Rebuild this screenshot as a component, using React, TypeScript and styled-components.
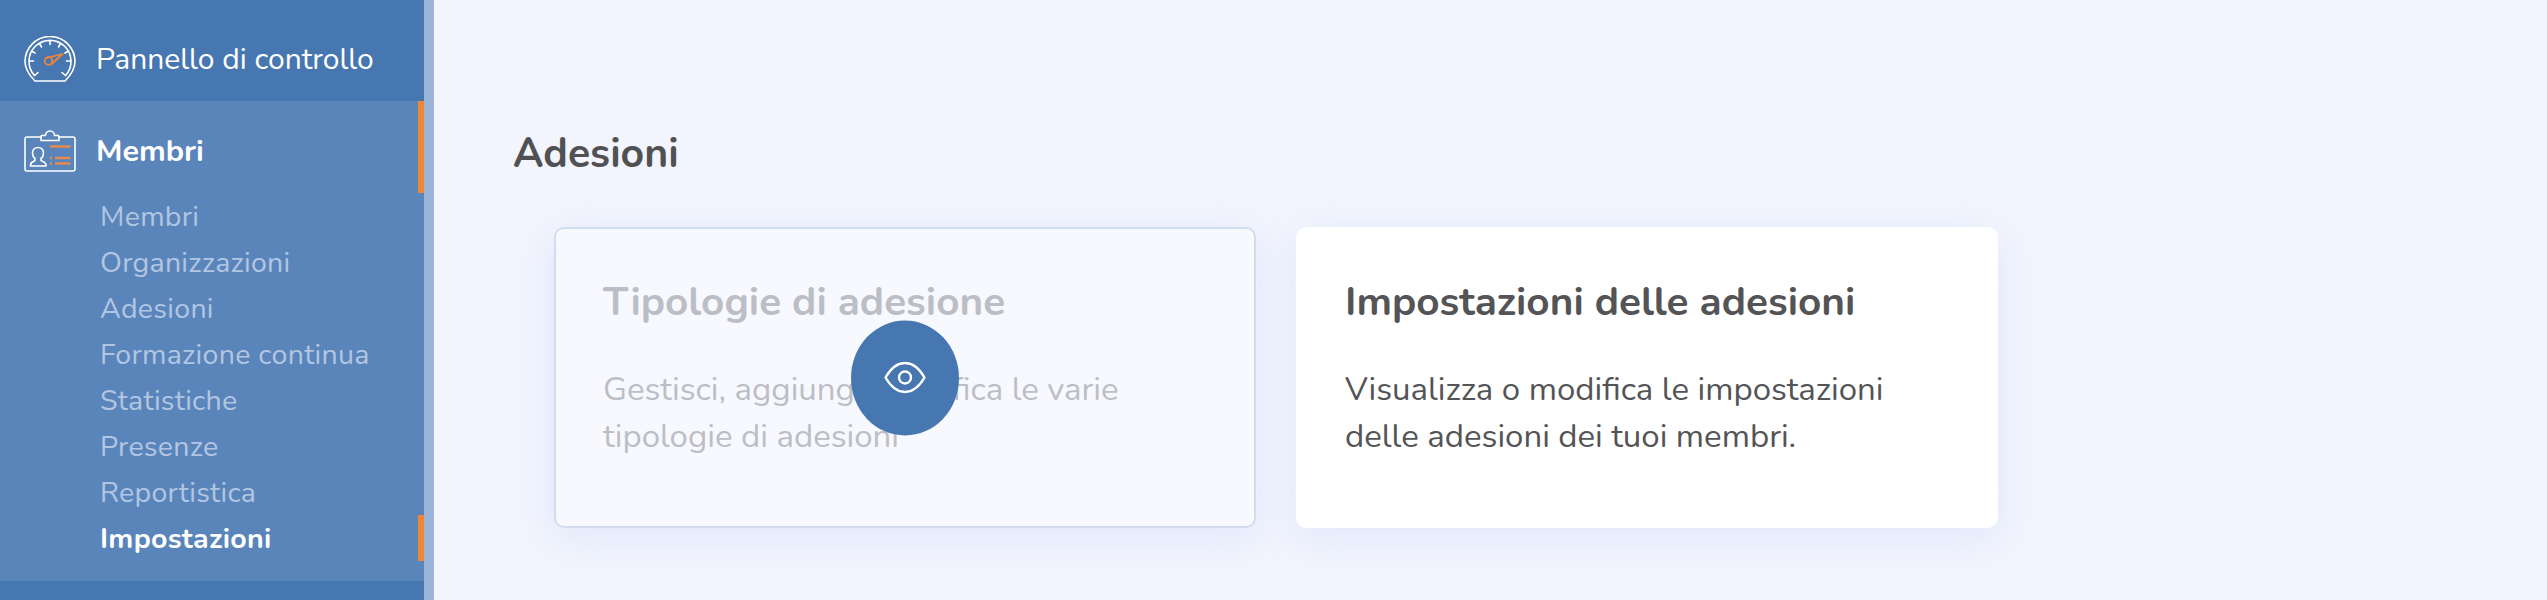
import styled, { createGlobalStyle } from "styled-components";

const GlobalStyle = createGlobalStyle`
  html, body {
    margin: 0;
    padding: 0;
    height: 100%;
    overflow: hidden;
  }
  body {
    font-family: "Nunito", "Lato", "Noto Sans", sans-serif;
  }
`;

const Page = styled.div`
  display: flex;
  width: 2547px;
  height: 600px;
  overflow: hidden;
  background: #f2f5fe;
`;

const Sidebar = styled.nav`
  flex: none;
  width: 424px;
  height: 600px;
  background: #4777b1;
  border-right: 10px solid #9bb5d9;
`;

const TopItem = styled.div`
  display: flex;
  align-items: center;
  height: 101px;
  padding: 17px 0 0 24px;
  box-sizing: border-box;
  color: #ffffff;
  font-size: 30px;
`;

const Section = styled.div`
  background: #5a85ba;
  padding-bottom: 20px;
`;

const SectionHead = styled.div`
  display: flex;
  align-items: center;
  height: 92px;
  padding: 7px 0 0 24px;
  box-sizing: border-box;
  border-right: 6px solid #ef8535;
  color: #ffffff;
  font-size: 30.5px;
  font-weight: 700;
`;

const IconSlot = styled.span`
  display: flex;
  width: 52px;
  margin-right: 20px;
`;

const SubItem = styled.div<{ $active?: boolean }>`
  height: 46px;
  line-height: 47px;
  padding-left: 100px;
  box-sizing: border-box;
  font-size: 28.5px;
  letter-spacing: 0.3px;
  color: ${(p) => (p.$active ? "#ffffff" : "#b2c6e2")};
  font-weight: ${(p) => (p.$active ? 700 : 400)};
  border-right: 6px solid ${(p) => (p.$active ? "#ef8535" : "transparent")};
`;

const Main = styled.main`
  flex: 1;
  padding: 130px 0 0 79px;
`;

const Heading = styled.h1`
  margin: 0 0 50px;
  height: 47px;
  line-height: 47px;
  font-size: 41px;
  font-weight: 700;
  color: #515154;
`;

const CardRow = styled.div`
  display: flex;
  gap: 40px;
  padding-left: 41px;
`;

const Card = styled.section<{ $muted?: boolean }>`
  position: relative;
  width: 702px;
  height: 301px;
  box-sizing: border-box;
  padding: 50px 49px 48px;
  border-radius: 10px;
  background: ${(p) => (p.$muted ? "#f7f9fe" : "#ffffff")};
  box-shadow: ${(p) => (p.$muted ? "inset 0 0 0 2px #d3dcec," : "")} 0 10px 40px rgba(120, 145, 220, 0.14);
  color: ${(p) => (p.$muted ? "#bcbec6" : "#545457")};
`;

const CardTitle = styled.h2`
  margin: 0 0 39px;
  line-height: 50px;
  font-size: 40.5px;
  font-weight: 700;
`;

const CardText = styled.p`
  margin: 0;
  font-size: 33px;
  line-height: 47px;
`;

const ViewButton = styled.button`
  position: absolute;
  left: 50%;
  top: 50%;
  width: 108px;
  height: 115px;
  transform: translate(-50%, -50%);
  display: flex;
  align-items: center;
  justify-content: center;
  padding: 0;
  border: none;
  border-radius: 50%;
  background: #4777b1;
`;

const GaugeIcon = () => (
  <svg width="52" height="46" viewBox="0 0 52 46" fill="none" stroke="#fff" strokeWidth="1.6" strokeLinecap="round" strokeLinejoin="round">
    <path d="M11 45H41C47 39 51 33 51 25.5A25 25 0 0 0 1 25.5C1 33 5 39 11 45Z" />
    <path d="M10.5 39.5A21 21 0 1 1 41.5 39.5" />
    <path d="M10.5 39.5L14 36.5M41.5 39.5L38 36.5M5.5 25H9.5M46.5 25H42.5M7.5 15L11 17M44.5 15L41 17M15.5 7.5L17.5 11M36.5 7.5L34.5 11M26 4.5V8.5" />
    <g stroke="#ef8535" strokeWidth="1.8">
      <circle cx="24.5" cy="25" r="3.8" />
      <path d="M22 22L38.5 18L27 28.5" />
    </g>
  </svg>
);

const BadgeIcon = () => (
  <svg width="52" height="43" viewBox="0 0 52 43" fill="none" stroke="#fff" strokeWidth="1.6" strokeLinecap="round" strokeLinejoin="round">
    <path d="M17 8H3A2 2 0 0 0 1 10V40A2 2 0 0 0 3 42H49A2 2 0 0 0 51 40V10A2 2 0 0 0 49 8H35" />
    <path d="M17 11.5H35V8A1.5 1.5 0 0 0 33 6.5H30.5A4.5 4.5 0 0 0 21.5 6.5H19A1.5 1.5 0 0 0 17 8Z" />
    <path d="M14 18.5C17.5 18.5 19.5 21 19.5 24C19.5 26.5 18.3 28.5 17 29.5V31.5C19.5 32.5 22 33.5 22 36V37H6.5V36C6.5 33.5 9 32.5 11 31.5V29.5C9.7 28.5 8.5 26.5 8.5 24C8.5 21 10.5 18.5 14 18.5Z" />
    <g stroke="#e58a4e" strokeWidth="2.4" strokeLinecap="butt">
      <path d="M26 17.5H46.5M26 29H28M26 34.5H28M31 29H46.5M31 34.5H46.5" />
    </g>
  </svg>
);

const EyeIcon = () => (
  <svg width="42" height="32" viewBox="0 0 42 32" fill="none" stroke="#fff" strokeWidth="2.4" strokeLinejoin="round">
    <path d="M1.5 16C7 6.5 13.5 1.5 21 1.5S35 6.5 40.5 16C35 25.5 28.5 30.5 21 30.5S7 25.5 1.5 16Z" />
    <circle cx="21" cy="16" r="6" />
  </svg>
);

const subItems = ["Membri", "Organizzazioni", "Adesioni", "Formazione continua", "Statistiche", "Presenze", "Reportistica"];

export default function App() {
  return (
    <Page>
      <GlobalStyle />
      <Sidebar>
        <TopItem>
          <IconSlot>
            <GaugeIcon />
          </IconSlot>
          Pannello di controllo
        </TopItem>
        <Section>
          <SectionHead>
            <IconSlot>
              <BadgeIcon />
            </IconSlot>
            Membri
          </SectionHead>
          {subItems.map((label) => (
            <SubItem key={label}>{label}</SubItem>
          ))}
          <SubItem $active>Impostazioni</SubItem>
        </Section>
      </Sidebar>
      <Main>
        <Heading>Adesioni</Heading>
        <CardRow>
          <Card $muted>
            <CardTitle>Tipologie di adesione</CardTitle>
            <CardText>
              Gestisci, aggiungi, modifica le varie
              <br />
              tipologie di adesioni
            </CardText>
            <ViewButton aria-label="Visualizza">
              <EyeIcon />
            </ViewButton>
          </Card>
          <Card>
            <CardTitle>Impostazioni delle adesioni</CardTitle>
            <CardText>
              Visualizza o modifica le impostazioni
              <br />
              delle adesioni dei tuoi membri.
            </CardText>
          </Card>
        </CardRow>
      </Main>
    </Page>
  );
}
